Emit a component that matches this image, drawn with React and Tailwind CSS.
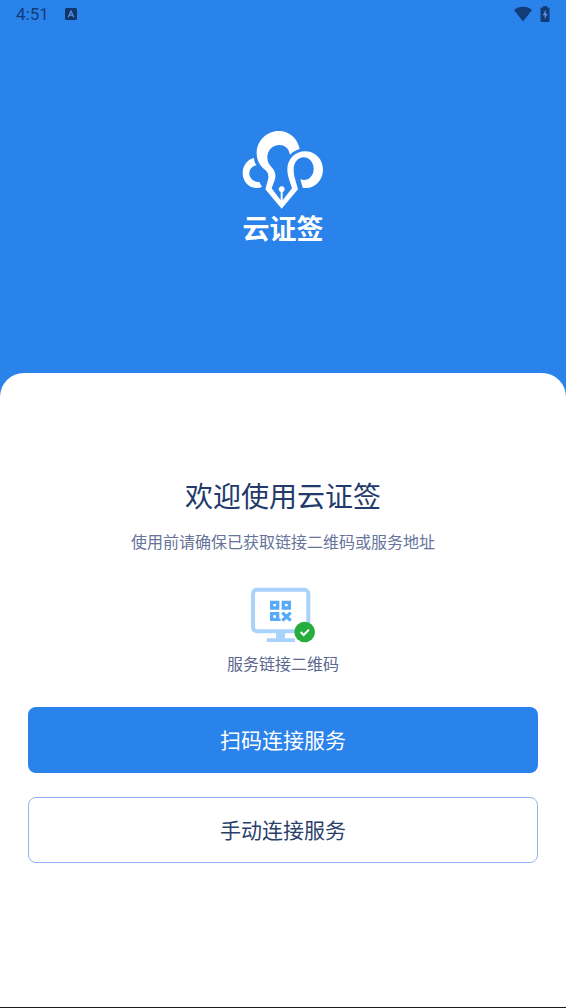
import React from "react";

function StatusBar() {
  return (
    <div className="flex h-7 items-center justify-between pl-4 pr-4 text-[#123c78]">
      <div className="flex items-center gap-4">
        <span className="font-['Roboto',sans-serif] text-[17px] font-normal leading-7">4:51</span>
        <svg className="h-3 w-3" viewBox="0 0 12 12" aria-hidden="true">
          <rect width="12" height="12" rx="1.5" fill="#0f356c" />
          <path d="M3.2 9.2 6 3l2.8 6.2M4.2 7.2h3.6" fill="none" stroke="#5b8fda" strokeWidth="1.3" />
        </svg>
      </div>
      <div className="flex items-center gap-2">
        <svg className="h-4 w-[18px]" viewBox="0 0 18 16" aria-hidden="true">
          <path d="M9 15.500 0 4C2.600 1.900 5.600.8 9 .8s6.400 1.100 9 3.200z" fill="#123c78" />
        </svg>
        <svg className="h-4 w-[10px]" viewBox="0 0 9 16" aria-hidden="true">
          <path d="M2.500 1.500V0h4v1.500H8a1 1 0 0 1 1 1V15a1 1 0 0 1-1 1H1a1 1 0 0 1-1-1V2.500a1 1 0 0 1 1-1z" fill="#123c78" />
          <path d="M5.300 3.800 2.200 9.300h2v3.900l3-5.500h-2z" fill="#5b95e4" />
        </svg>
      </div>
    </div>
  );
}

function Logo() {
  return (
    <div className="flex flex-col items-center text-white">
      <svg className="h-20 w-[82px]" viewBox="12 12 246 240" aria-hidden="true">
        <path
          fill="currentColor"
          d="M185 69C179 37 154 15 122 15C86 15 56 45 56 81C56 103 66 120 81 131C91 139 93 150 90 161L82 190L131 248L180 190L171 158C168 148 167 140 167 130C167 109 180 94 197 94C215 94 227 110 227 129C227 148 214 162 198 162C194 162 190 161 187 160L194 185C197 186 200 186 203 186C232 186 255 161 255 131C255 99 231 76 201 76C171 76 148 100 148 130C148 144 151 153 154 163L162 187L134 223V198A9 9 0 1 0 128 198V223L101 187L110 163C115 148 112 135 102 125C93 116 88 107 88 94C88 73 104 57 124 57C141 57 152 67 156 86C164 78 174 72 185 69Z"
        />
        <path
          fill="currentColor"
          d="M48 96C28 100 14 119 14 141C14 166 32 186 56 186C62 186 67 185 72 183L64 168C47 169 34 157 34 142C34 129 43 119 56 118C51 112 48 104 48 96Z"
        />
      </svg>
      <span className="font-['Noto_Sans_CJK_SC',sans-serif] text-[27px] font-bold leading-9">云证签</span>
    </div>
  );
}

function MonitorIcon() {
  return (
    <svg className="h-14 w-[66px]" viewBox="30 22 198 168" aria-hidden="true">
      <rect x="39" y="30" width="166" height="125" rx="12" fill="#fff" stroke="#a9d3fc" strokeWidth="12" />
      <path d="M108 159h27v17h26a4 4 0 0 1 4 4v7H80v-7a4 4 0 0 1 4-4h24z" fill="#a9d3fc" />
      <g fill="none" stroke="#59abf7" strokeWidth="10">
        <path d="M95 68h18v17H95zM130 68h18v17h-18zM95 102h18v17H95z" />
        <path d="m127 99 25 24M152 99l-25 24" />
      </g>
      <path d="M111 117h11v7h-11zM133 105h12v12h-12z" fill="#59abf7" />
      <circle cx="194" cy="157" r="31" fill="#27ad3d" />
      <path d="m182 157 9 9 16-16" fill="none" stroke="#fff" strokeWidth="6" />
    </svg>
  );
}

export default function App() {
  return (
    <div className="flex min-h-screen flex-col border-b border-[#1c1c1c] bg-[#2a82eb] font-['Noto_Sans_CJK_SC',sans-serif]">
      <StatusBar />
      <header className="flex justify-center pb-[127px] pt-[102px]">
        <Logo />
      </header>
      <main className="flex flex-1 flex-col items-center rounded-t-3xl bg-white px-7 pb-12 pt-[102px]">
        <h1 className="text-[28px] font-normal leading-10 text-[#233a6b]">欢迎使用云证签</h1>
        <p className="mt-[14px] text-base leading-6 text-[#66739a]">使用前请确保已获取链接二维码或服务地址</p>
        <figure className="mt-[34px] flex flex-col items-center gap-2">
          <MonitorIcon />
          <figcaption className="text-base leading-6 text-[#5a678f]">服务链接二维码</figcaption>
        </figure>
        <div className="mt-8 flex w-full flex-col gap-6">
          <button type="button" className="h-[66px] w-full rounded-lg bg-[#2a82eb] text-[21px] text-white">
            扫码连接服务
          </button>
          <button type="button" className="h-[66px] w-full rounded-lg border border-[#94b0f4] bg-white text-[21px] text-[#2b3f6c]">
            手动连接服务
          </button>
        </div>
      </main>
    </div>
  );
}
